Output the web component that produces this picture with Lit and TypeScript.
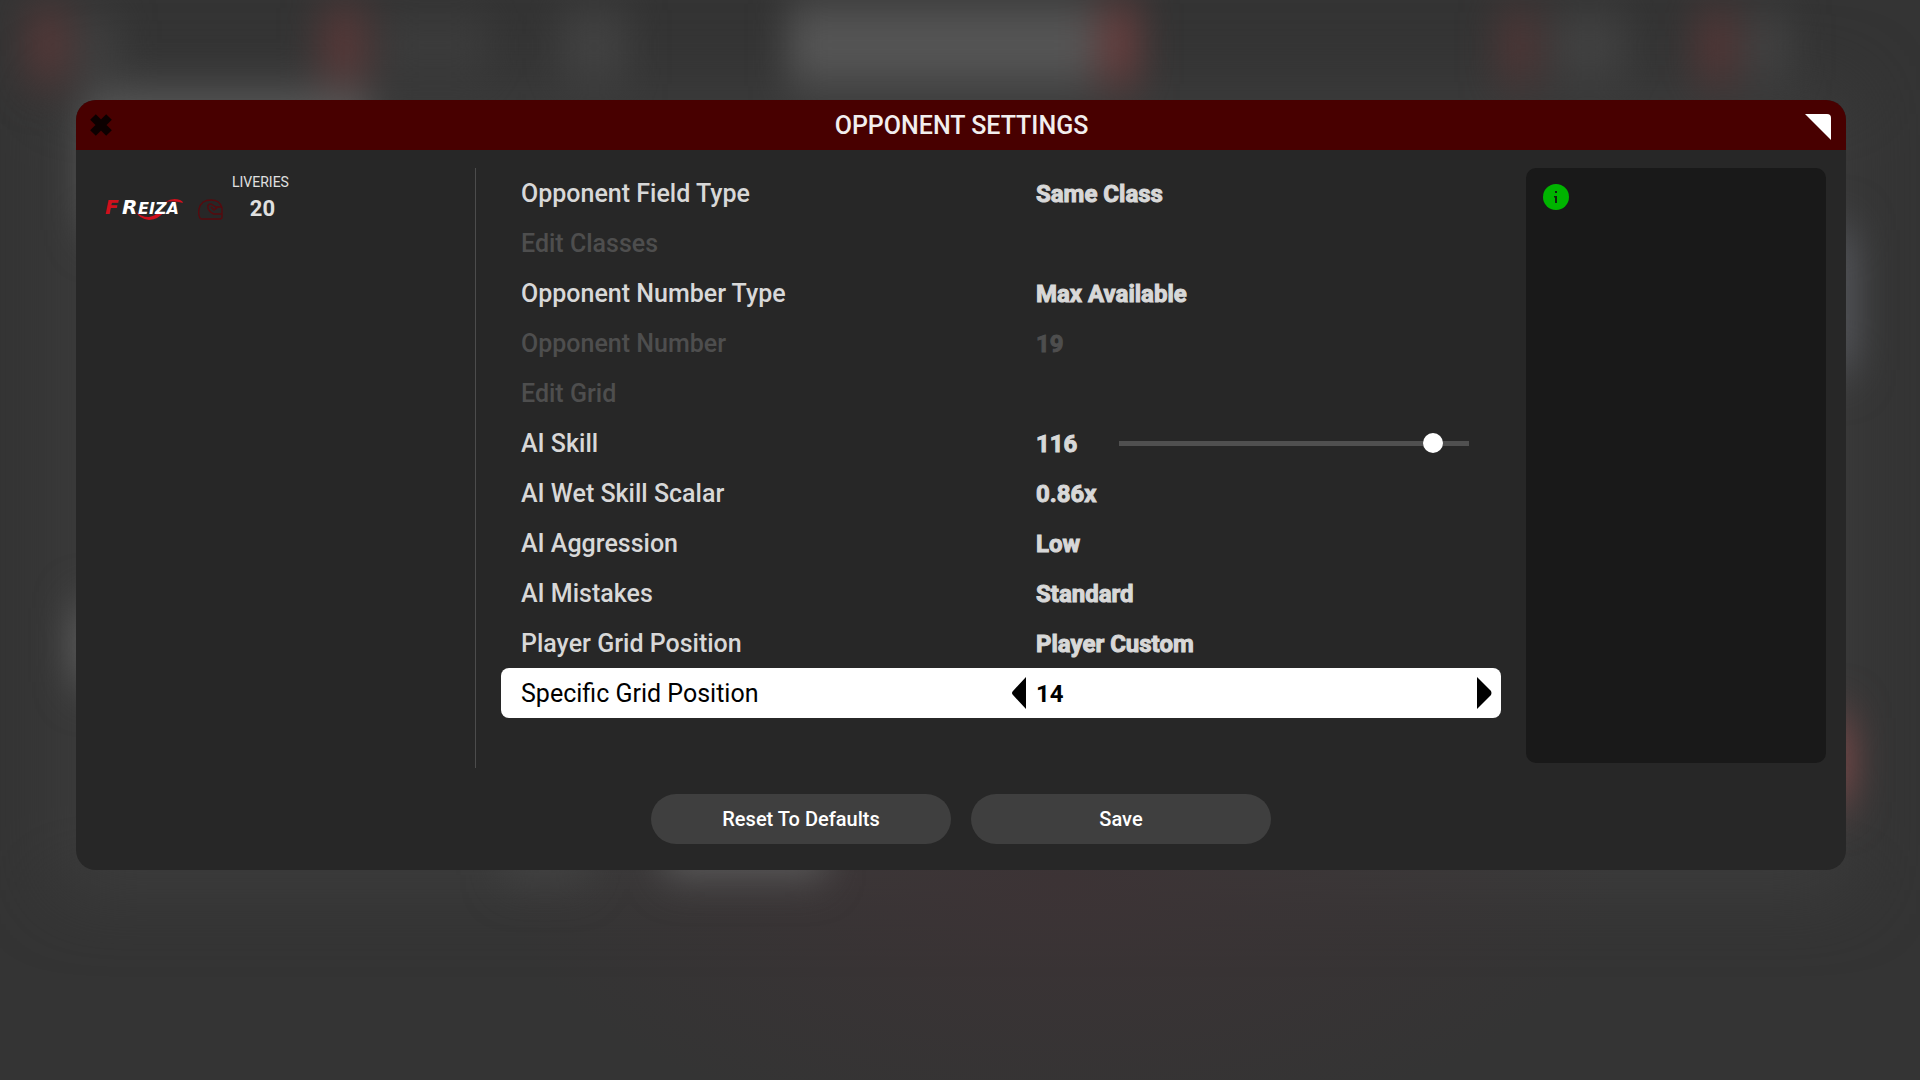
import { LitElement, html, css, svg, nothing } from "lit";
import { customElement, property, state } from "lit/decorators.js";
import { classMap } from "lit/directives/class-map.js";

interface Setting {
  id: string;
  label: string;
  value?: string;
  kind: "choice" | "action" | "slider";
  disabled?: boolean;
  selected?: boolean;
}

const SETTINGS: Setting[] = [
  { id: "field-type", label: "Opponent Field Type", value: "Same Class", kind: "choice" },
  { id: "edit-classes", label: "Edit Classes", kind: "action", disabled: true },
  { id: "number-type", label: "Opponent Number Type", value: "Max Available", kind: "choice" },
  { id: "number", label: "Opponent Number", value: "19", kind: "choice", disabled: true },
  { id: "edit-grid", label: "Edit Grid", kind: "action", disabled: true },
  { id: "skill", label: "AI Skill", value: "116", kind: "slider" },
  { id: "wet-skill", label: "AI Wet Skill Scalar", value: "0.86x", kind: "choice" },
  { id: "aggression", label: "AI Aggression", value: "Low", kind: "choice" },
  { id: "mistakes", label: "AI Mistakes", value: "Standard", kind: "choice" },
  { id: "grid-position", label: "Player Grid Position", value: "Player Custom", kind: "choice" },
  { id: "specific-position", label: "Specific Grid Position", value: "14", kind: "choice", selected: true },
];

/** Soft, out-of-focus shapes of the screen behind the dialog. */
@customElement("blurred-backdrop")
export class BlurredBackdrop extends LitElement {
  static styles = css`
    :host {
      display: block;
      position: absolute;
      inset: 0;
      overflow: hidden;
      background: #343434;
    }
    .scene {
      display: block;
      width: 100%;
      height: 100%;
    }
  `;

  render() {
    return html`<svg class="scene" viewBox="0 0 1920 1080" preserveAspectRatio="none" aria-hidden="true">
      <defs>
        <filter id="soft" filterUnits="userSpaceOnUse" color-interpolation-filters="sRGB" x="-100" y="-100" width="2120" height="1280">
          <feGaussianBlur stdDeviation="18 24" />
        </filter>
        <filter id="wide" filterUnits="userSpaceOnUse" color-interpolation-filters="sRGB" x="-100" y="-100" width="2120" height="1280">
          <feGaussianBlur stdDeviation="36" />
        </filter>
        <radialGradient id="warm">
          <stop offset="0" stop-color="#3c3335" />
          <stop offset="1" stop-color="#3c3335" stop-opacity="0" />
        </radialGradient>
      </defs>
      ${svg`
        <g filter="url(#wide)">
          <rect x="60" y="90" width="1790" height="800" fill="#3c3c3c" />
        </g>
        <ellipse cx="1060" cy="880" rx="560" ry="260" fill="url(#warm)" />
        <g filter="url(#soft)">
          <rect x="26" y="10" width="44" height="70" fill="#563838" />
          <rect x="78" y="20" width="40" height="50" fill="#424242" />
          <rect x="320" y="8" width="48" height="74" fill="#583838" />
          <rect x="380" y="20" width="110" height="50" fill="#3d3d3d" />
          <rect x="560" y="10" width="68" height="74" fill="#424242" />
          <rect x="788" y="4" width="308" height="82" fill="#565656" />
          <rect x="1098" y="4" width="42" height="80" fill="#683e3e" />
          <rect x="1498" y="12" width="42" height="70" fill="#4f3636" />
          <rect x="1552" y="14" width="74" height="66" fill="#424242" />
          <rect x="1696" y="12" width="42" height="70" fill="#543636" />
          <rect x="1746" y="14" width="46" height="66" fill="#424242" />
          <rect x="84" y="96" width="286" height="134" fill="#5c5c5c" />
          <rect x="72" y="608" width="100" height="74" fill="#606060" />
          <rect x="1816" y="230" width="40" height="140" fill="#54565b" />
          <rect x="1812" y="718" width="40" height="84" fill="#7c4848" />
          <rect x="664" y="816" width="162" height="54" fill="#646464" />
          <rect x="500" y="830" width="90" height="46" fill="#444444" />
        </g>
      `}
    </svg>`;
  }
}

/** One line of the settings list: a label and the control for its value. */
@customElement("setting-row")
export class SettingRow extends LitElement {
  static styles = css`
    :host {
      display: block;
    }
    .row {
      display: grid;
      grid-template-columns: 51fr 49fr;
      align-items: center;
      height: 50px;
      border-radius: 8px;
      color: #d8d8d8;
      font-size: 25px;
      font-weight: 500;
      line-height: 30px;
    }
    .disabled {
      color: #4e4e4e;
    }
    .selected {
      background: #ffffff;
      color: #000000;
      font-weight: 400;
    }
    .label,
    .action {
      padding: 2px 0 0 20px;
    }
    .control {
      display: flex;
      align-items: center;
      padding-right: 9px;
    }
    .value {
      flex: 1;
      padding: 2px 0 0 25px;
      font-size: 24px;
      font-weight: 700;
      -webkit-text-stroke: 1px currentColor;
    }
    .selected .value {
      padding-left: 10px;
      -webkit-text-stroke: 0;
    }
    .slider .value {
      flex: 0 0 83px;
    }
    .slider .control {
      padding-right: 32px;
    }
    button {
      border: 0;
      margin: 0;
      padding: 0;
      background: none;
      color: inherit;
      font: inherit;
      text-align: left;
    }
    .arrow {
      display: block;
      width: 15px;
      height: 32px;
    }
    .arrow svg {
      display: block;
    }
    .range {
      appearance: none;
      flex: 1;
      min-width: 0;
      height: 20px;
      margin: 0;
      background: linear-gradient(#505050, #505050) center / 100% 5px no-repeat;
    }
    .range::-webkit-slider-thumb {
      appearance: none;
      width: 20px;
      height: 20px;
      border-radius: 50%;
      background: #ffffff;
    }
  `;

  @property({ attribute: false }) setting!: Setting;
  @state() private current = "";

  willUpdate() {
    if (this.current === "") this.current = this.setting.value ?? "";
  }

  private step(delta: number) {
    this.current = String(Math.max(1, Math.min(20, Number(this.current) + delta)));
  }

  render() {
    const s = this.setting;
    const classes = { row: true, disabled: !!s.disabled, selected: !!s.selected, slider: s.kind === "slider" };
    if (s.kind === "action") {
      return html`<div class=${classMap(classes)}>
        <button class="action" type="button" ?disabled=${s.disabled}>${s.label}</button>
      </div>`;
    }
    return html`<div class=${classMap(classes)}>
      <label class="label" for=${s.id}>${s.label}</label>
      <div class="control">
        ${s.selected
          ? html`<button class="arrow" type="button" aria-label="Previous" @click=${() => this.step(-1)}>
              <svg width="15" height="32" viewBox="0 0 15 32"><path d="M15 0V32L2 18Q0 16 2 14Z" /></svg>
            </button>`
          : nothing}
        ${s.kind === "slider"
          ? html`<output class="value">${this.current}</output>
              <input
                id=${s.id}
                class="range"
                type="range"
                min="70"
                max="120"
                .value=${this.current}
                @input=${(e: Event) => (this.current = (e.target as HTMLInputElement).value)}
              />`
          : html`<output id=${s.id} class="value">${this.current}</output>`}
        ${s.selected
          ? html`<button class="arrow" type="button" aria-label="Next" @click=${() => this.step(1)}>
              <svg width="15" height="32" viewBox="0 0 15 32"><path d="M0 0V32L14 18Q15 16 14 14Z" /></svg>
            </button>`
          : nothing}
      </div>
    </div>`;
  }
}

@customElement("app-root")
export class AppRoot extends LitElement {
  static styles = css`
    :host {
      display: block;
      position: relative;
      box-sizing: border-box;
      min-height: 100vh;
      padding: 100px 74px 100px 76px;
      background: #343434;
      font-family: Roboto, "Liberation Sans", sans-serif;
    }
    .dialog {
      position: relative;
      overflow: hidden;
      border-radius: 20px;
      background: #272727;
    }
    .header {
      display: grid;
      grid-template-columns: 1fr auto 1fr;
      align-items: center;
      height: 50px;
      padding: 0 15px 0 14px;
      background: #480000;
    }
    .title {
      margin: 0;
      padding: 2px 0 0 2px;
      color: #f2eeee;
      font-size: 25px;
      font-weight: 500;
      line-height: 30px;
    }
    .close {
      justify-self: start;
      border: 0;
      padding: 0;
      background: none;
    }
    .close svg,
    .corner {
      display: block;
    }
    .corner {
      justify-self: end;
      padding-top: 4px;
    }
    .body {
      display: grid;
      grid-template-columns: 400px 1fr 300px;
      column-gap: 25px;
      min-height: 600px;
      padding: 18px 20px 0 0;
    }
    .sidebar {
      box-sizing: border-box;
      border-right: 1px solid #4c4c4c;
      padding: 4px 0 0 27px;
    }
    .team {
      display: flex;
      align-items: flex-end;
      gap: 12px;
    }
    .count {
      display: flex;
      flex-direction: column;
      align-items: center;
      gap: 4px;
      margin: 0 0 0 -4px;
      color: #e0e0e0;
    }
    .count dt {
      font-size: 14px;
      line-height: 20px;
    }
    .count dd {
      margin: 0;
      padding-left: 4px;
      font-size: 22px;
      font-weight: 700;
      line-height: 26px;
    }
    .logo,
    .helmet {
      display: block;
    }
    .word {
      font-family: "DejaVu Sans", Roboto, sans-serif;
      font-style: italic;
      font-weight: 700;
    }
    .info {
      margin-bottom: 5px;
      padding: 16px 17px;
      border-radius: 10px;
      background: #191919;
    }
    .info svg {
      display: block;
    }
    .actions {
      display: flex;
      justify-content: center;
      gap: 20px;
      padding: 26px 0;
    }
    .pill {
      width: 300px;
      height: 50px;
      border: 0;
      border-radius: 25px;
      background: #3f3f3f;
      color: #ffffff;
      font-family: inherit;
      font-size: 20px;
      font-weight: 500;
      line-height: 24px;
    }
  `;

  render() {
    return html`
      <blurred-backdrop></blurred-backdrop>
      <main class="dialog">
        <header class="header">
          <button class="close" type="button" aria-label="Close">
            <svg width="22" height="22" viewBox="0 0 22 22">
              <path d="M3 3L19 19M19 3L3 19" stroke="#0c0000" stroke-width="8" />
            </svg>
          </button>
          <h1 class="title">OPPONENT SETTINGS</h1>
          <svg class="corner" width="26" height="26" viewBox="0 0 26 26" aria-hidden="true">
            <path d="M0 0H22Q26 0 26 4V26Z" fill="#ffffff" />
          </svg>
        </header>
        <div class="body">
          <aside class="sidebar">
            <div class="team">
              <svg class="logo" width="83" height="28" viewBox="0 0 83 28">
                <path d="M33 17Q37 23 46 23Q52 22 56 18H61Q56 25 46 26Q36 25 33 17Z" fill="#d0101c" />
                <text class="word" y="20">
                  <tspan x="2" font-size="20" fill="#d0101c">F</tspan><tspan x="19" font-size="20" fill="#ffffff">R</tspan><tspan x="35" font-size="16" fill="#ffffff">EIZA</tspan>
                </text>
                <path d="M62 8Q70 3 77 6Q80 7 80 9Q71 6 62 8Z" fill="#d0101c" />
              </svg>
              <svg class="helmet" width="26" height="28" viewBox="0 0 26 28" fill="none" stroke="#560a0e" stroke-width="1.4" aria-hidden="true">
                <path d="M2 24Q0 21 1 15Q3 6 13 6Q22 6 24 14V23Q24 25 22 25H4Q2 25 2 24Z" />
                <path d="M24 13H18L13 10Q9 10 10 14Q11 18 16 20H24M13 13L16 16L20 13" />
              </svg>
              <dl class="count">
                <dt>LIVERIES</dt>
                <dd>20</dd>
              </dl>
            </div>
          </aside>
          <section class="list">
            ${SETTINGS.map((s) => html`<setting-row .setting=${s}></setting-row>`)}
          </section>
          <aside class="info">
            <svg width="26" height="26" viewBox="0 0 26 26" role="img" aria-label="Information">
              <circle cx="13" cy="13" r="13" fill="#00b400" />
              <path d="M12 7H14V9H12ZM11 12H14V19H12V13.5H11Z" fill="#102010" />
            </svg>
          </aside>
        </div>
        <footer class="actions">
          <button class="pill" type="button">Reset To Defaults</button>
          <button class="pill" type="button">Save</button>
        </footer>
      </main>
    `;
  }
}
